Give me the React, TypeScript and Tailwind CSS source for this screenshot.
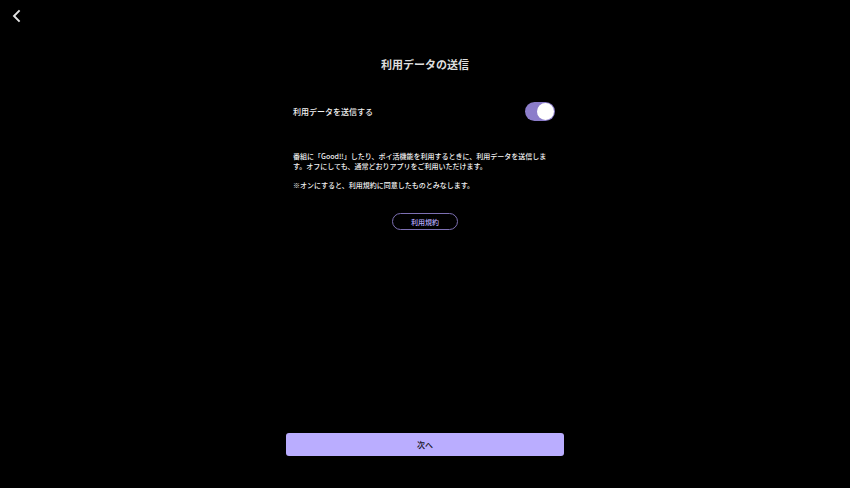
import { useState } from "react";

export default function App() {
  const [enabled, setEnabled] = useState(true);

  return (
    <div className="flex min-h-screen flex-col bg-black pb-8 font-['Noto_Sans_CJK_JP',sans-serif] font-medium text-[#f2f2f2]">
      <header className="flex h-8 items-center px-2">
        <button type="button" aria-label="戻る" className="flex size-4 items-center justify-center">
          <svg viewBox="0 0 16 16" className="size-4" fill="none" stroke="#e4e4e4" strokeWidth="1.9">
            <path d="M11.6 2.4 L6 8 L11.6 13.6" />
          </svg>
        </button>
      </header>

      <main className="mx-auto flex w-full max-w-[278px] grow flex-col">
        <h1 className="mt-6 text-center text-[11px] leading-4 font-bold text-[#dedede]">利用データの送信</h1>

        <div className="mt-7 flex h-[23px] items-center justify-between pr-[9px] pl-[7px]">
          <label htmlFor="send-data" className="text-[8px] leading-3">
            利用データを送信する
          </label>
          <input
            id="send-data"
            type="checkbox"
            role="switch"
            checked={enabled}
            onChange={(e) => setEnabled(e.target.checked)}
            className="flex h-[19px] w-[30px] cursor-pointer appearance-none items-center rounded-full bg-[#5a5a5a] px-px before:size-[17px] before:rounded-full before:bg-white checked:justify-end checked:bg-[#8c7dca]"
          />
        </div>

        <div className="mt-7 flex flex-col gap-[9px] pr-2 pl-[7px] text-[7px] leading-[10px]">
          <p>
            番組に「Good!!」したり、ポイ活機能を利用するときに、利用データを送信します。オフにしても、通常どおりアプリをご利用いただけます。
          </p>
          <p>※オンにすると、利用規約に同意したものとみなします。</p>
        </div>

        <button
          type="button"
          className="mt-[23px] h-[17px] w-[66px] self-center rounded-full border border-[#7d70b3] text-[7px] leading-3 text-[#baadff]"
        >
          利用規約
        </button>

        <button
          type="button"
          className="mt-auto h-[23px] w-full shrink-0 rounded-[3px] bg-[#baadff] text-[8px] leading-3 text-[#15121f]"
        >
          次へ
        </button>
      </main>
    </div>
  );
}
